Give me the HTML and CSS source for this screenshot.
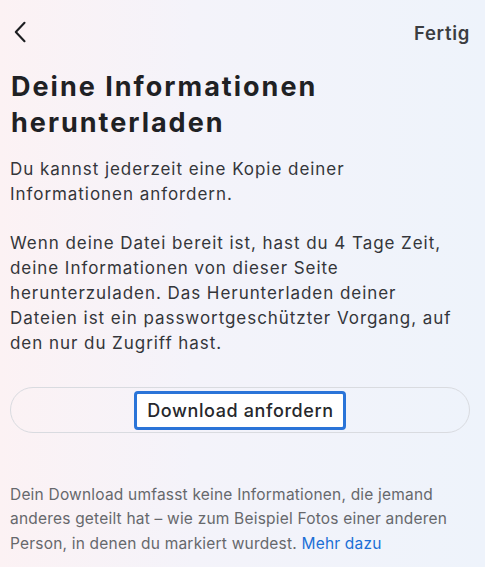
FILE: index.html
```html
<!DOCTYPE html>
<html lang="de">
<head>
<meta charset="utf-8">
<title>Deine Informationen herunterladen</title>
<link rel="stylesheet" href="styles.css">
</head>
<body>
<div class="screen">
  <header class="topbar">
    <button class="back" aria-label="Zurück">
      <svg width="16" height="22" viewBox="0 0 16 22" fill="none"><path d="M12.5 1.8 L3.8 11 L12.5 20.2" stroke="#1c1e21" stroke-width="2.1" stroke-linecap="round" stroke-linejoin="round"/></svg>
    </button>
    <span class="done">Fertig</span>
  </header>
  <main class="content">
    <h1 class="title">Deine Informationen herunterladen</h1>
    <p class="text first">Du kannst jederzeit eine Kopie deiner Informationen anfordern.</p>
    <p class="text second">Wenn deine Datei bereit ist, hast du 4 Tage Zeit, deine Informationen von dieser Seite herunterzuladen. Das Herunterladen deiner Dateien ist ein passwortgeschützter Vorgang, auf den nur du Zugriff hast.</p>
    <button class="pill"><span class="focus">Download anfordern</span></button>
    <p class="note">Dein Download umfasst keine Informationen, die jemand anderes geteilt hat – wie zum Beispiel Fotos einer anderen Person, in denen du markiert wurdest. <a class="link" href="#">Mehr dazu</a></p>
  </main>
</div>
</body>
</html>
```
FILE: styles.css
```css
* { box-sizing: border-box; }
html, body { margin: 0; padding: 0; }
body {
  font-family: Inter, "Noto Sans", sans-serif;
  color: #1c1e21;
  background: linear-gradient(90deg, #fcf2f4 0%, #f4f3fa 40%, #eef3fb 100%);
  width: 485px;
  height: 567px;
  overflow: hidden;
}
.screen { padding: 0 20px 0 10px; }
.topbar {
  display: flex;
  justify-content: space-between;
  align-items: center;
  height: 64px;
  margin-right: -5px;
}
.back {
  background: none;
  border: 0;
  padding: 0 0 0 2px;
  display: flex;
  align-items: center;
}
.done {
  font-size: 18.5px;
  font-weight: 600;
  letter-spacing: 0.7px;
  color: #3b3d41;
  padding-top: 2px;
}
.content { display: flex; flex-direction: column; }
.title {
  margin: 5px 0 0 1px;
  font-size: 27px;
  font-weight: 700;
  line-height: 36px;
  letter-spacing: 2px;
  color: #1f2124;
}
.text {
  margin: 0;
  font-size: 17px;
  line-height: 25px;
  letter-spacing: 0.95px;
  color: #34363a;
}
.first { margin-top: 16px; }
.second { margin-top: 24px; }
.pill {
  margin-top: 31px;
  height: 46px;
  width: 460px;
  border: 1px solid #d9dbe0;
  border-radius: 23px;
  background: transparent;
  display: flex;
  justify-content: center;
  align-items: center;
  padding: 0;
}
.focus {
  display: inline-flex;
  align-items: center;
  border: 3.5px solid #2a74d8;
  border-radius: 4px;
  background: #fff;
  padding: 0 9px 0 10px;
  font-family: Inter, "Noto Sans", sans-serif;
  font-size: 18px;
  font-weight: 500;
  letter-spacing: 0.6px;
  color: #26282c;
  height: 39px;
}
.note {
  margin: 50px -10px 0 0;
  font-size: 15.5px;
  line-height: 24.3px;
  letter-spacing: 0.2px;
  color: #66686c;
}
.link { color: #1b6fd6; text-decoration: none; }
```
